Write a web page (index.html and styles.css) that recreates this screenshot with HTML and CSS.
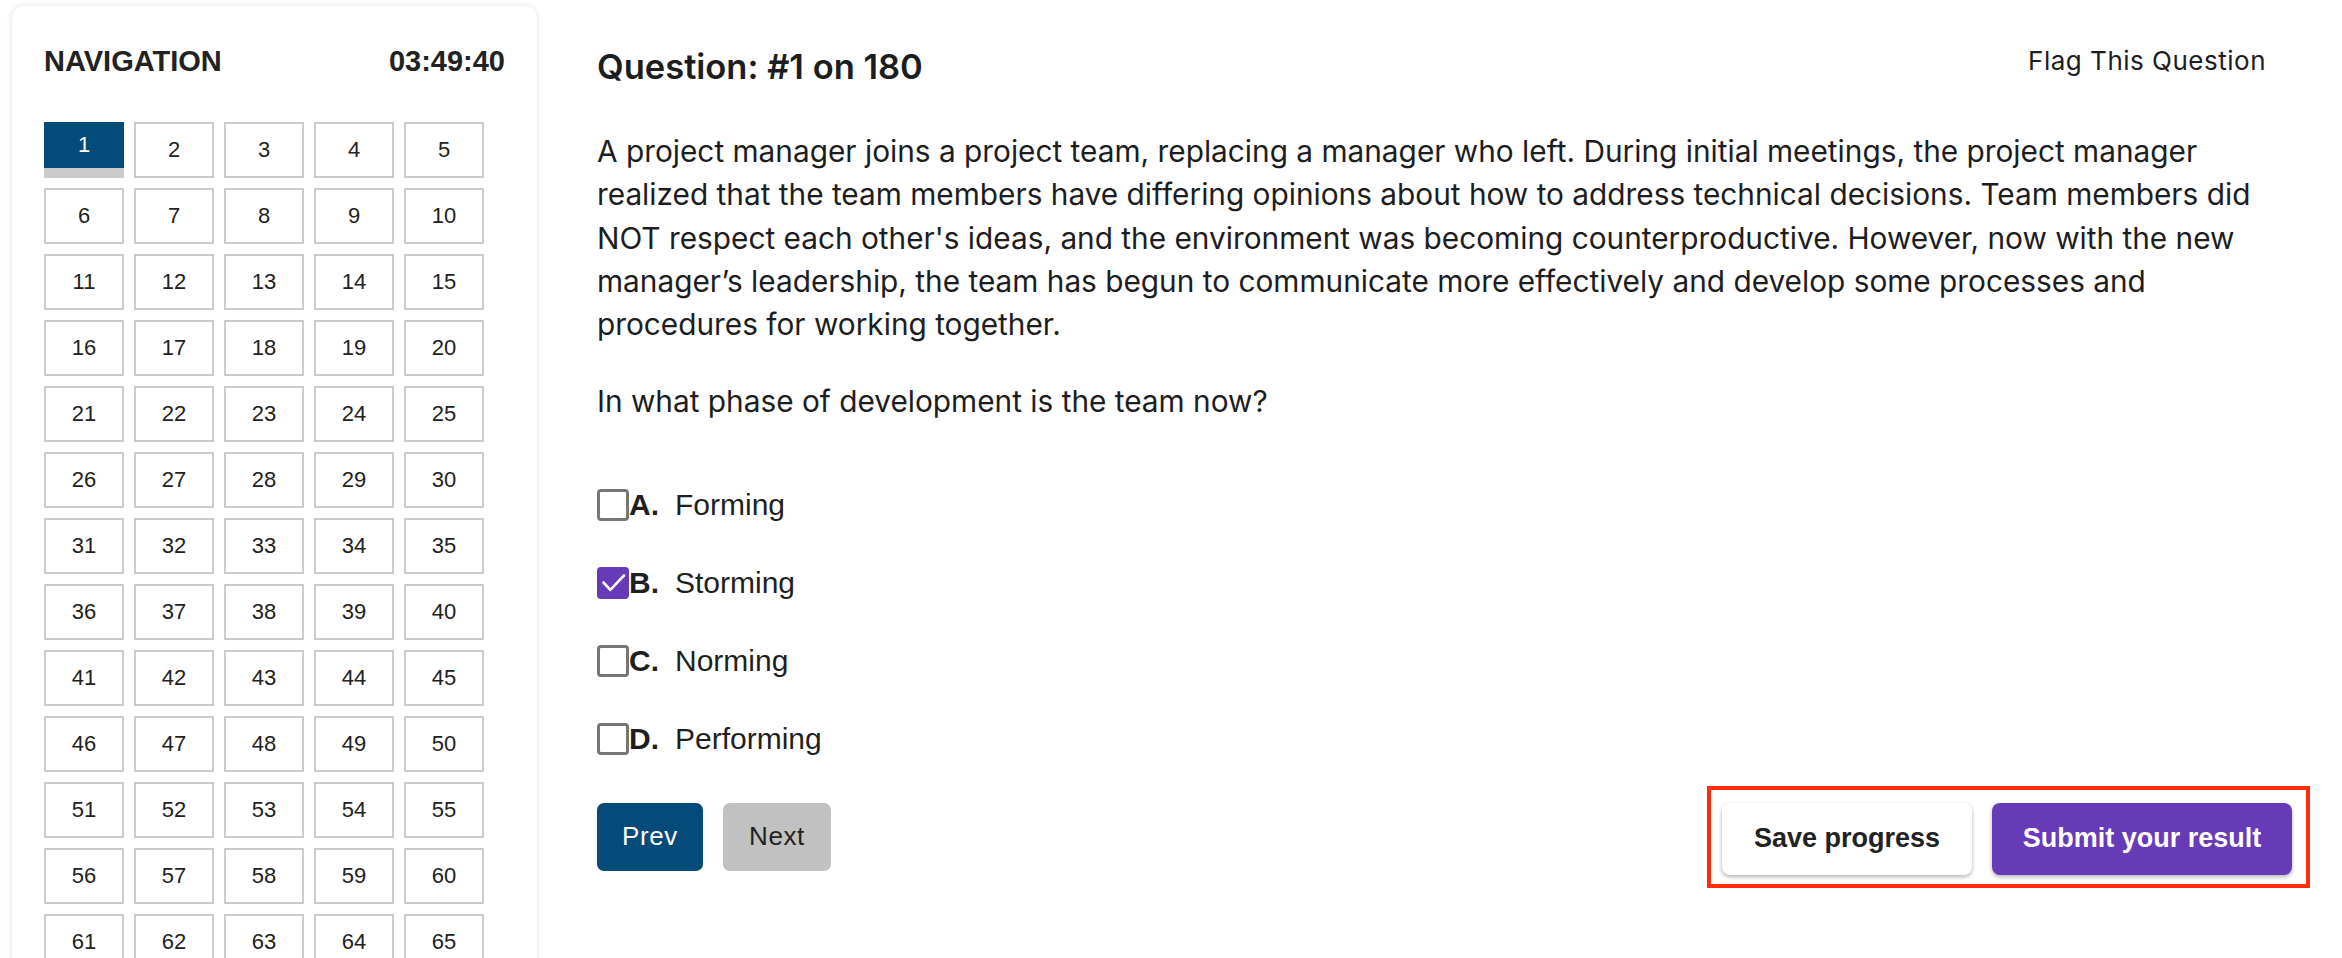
FILE: index.html
```html
<!DOCTYPE html>
<html lang="en">
<head>
<meta charset="utf-8">
<title>Exam</title>
<link rel="stylesheet" href="styles.css">
</head>
<body>
<div class="page">
  <aside class="nav-card">
    <div class="nav-head">
      <span class="nav-title">NAVIGATION</span>
      <span class="nav-timer">03:49:40</span>
    </div>
    <div class="nav-grid">
      <button class="cell current">1</button><button class="cell">2</button><button class="cell">3</button><button class="cell">4</button><button class="cell">5</button>
      <button class="cell">6</button><button class="cell">7</button><button class="cell">8</button><button class="cell">9</button><button class="cell">10</button>
      <button class="cell">11</button><button class="cell">12</button><button class="cell">13</button><button class="cell">14</button><button class="cell">15</button>
      <button class="cell">16</button><button class="cell">17</button><button class="cell">18</button><button class="cell">19</button><button class="cell">20</button>
      <button class="cell">21</button><button class="cell">22</button><button class="cell">23</button><button class="cell">24</button><button class="cell">25</button>
      <button class="cell">26</button><button class="cell">27</button><button class="cell">28</button><button class="cell">29</button><button class="cell">30</button>
      <button class="cell">31</button><button class="cell">32</button><button class="cell">33</button><button class="cell">34</button><button class="cell">35</button>
      <button class="cell">36</button><button class="cell">37</button><button class="cell">38</button><button class="cell">39</button><button class="cell">40</button>
      <button class="cell">41</button><button class="cell">42</button><button class="cell">43</button><button class="cell">44</button><button class="cell">45</button>
      <button class="cell">46</button><button class="cell">47</button><button class="cell">48</button><button class="cell">49</button><button class="cell">50</button>
      <button class="cell">51</button><button class="cell">52</button><button class="cell">53</button><button class="cell">54</button><button class="cell">55</button>
      <button class="cell">56</button><button class="cell">57</button><button class="cell">58</button><button class="cell">59</button><button class="cell">60</button>
      <button class="cell">61</button><button class="cell">62</button><button class="cell">63</button><button class="cell">64</button><button class="cell">65</button>
      <button class="cell">66</button><button class="cell">67</button><button class="cell">68</button><button class="cell">69</button><button class="cell">70</button>
      <button class="cell">71</button><button class="cell">72</button><button class="cell">73</button><button class="cell">74</button><button class="cell">75</button>
    </div>
  </aside>

  <main class="question">
    <div class="q-head">
      <h1 class="q-title">Question: #1 on 180</h1>
      <button class="flag">Flag This Question</button>
    </div>
    <p class="q-text">A project manager joins a project team, replacing a manager who left. During initial meetings, the project manager realized that the team members have differing opinions about how to address technical decisions. Team members did NOT respect each other's ideas, and the environment was becoming counterproductive. However, now with the new manager’s leadership, the team has begun to communicate more effectively and develop some processes and procedures for working together.</p>
    <p class="q-ask">In what phase of development is the team now?</p>

    <ul class="options">
      <li class="option">
        <span class="box"></span><span class="letter">A.</span><span class="answer">Forming</span>
      </li>
      <li class="option">
        <span class="box checked"><svg viewBox="0 0 32 32" width="32" height="32"><polyline points="6.5,15.5 13.3,22.8 27,8.5" fill="none" stroke="#fff" stroke-width="2.6" stroke-linecap="round" stroke-linejoin="round"/></svg></span><span class="letter">B.</span><span class="answer">Storming</span>
      </li>
      <li class="option">
        <span class="box"></span><span class="letter">C.</span><span class="answer">Norming</span>
      </li>
      <li class="option">
        <span class="box"></span><span class="letter">D.</span><span class="answer">Performing</span>
      </li>
    </ul>

    <div class="actions">
      <div class="pager">
        <button class="btn-prev">Prev</button>
        <button class="btn-next">Next</button>
      </div>
      <div class="submit-group">
        <button class="btn-save">Save progress</button>
        <button class="btn-submit">Submit your result</button>
      </div>
    </div>
  </main>
</div>
</body>
</html>
```

FILE: styles.css
```css
* { box-sizing: border-box; }
html, body { margin: 0; padding: 0; background: #fff; }
body { overflow: hidden; color: #1f1f1f; }

.page {
  display: flex;
  align-items: flex-start;
  padding: 6px 50px 0 12px;
  height: 958px;
}

/* Sidebar */
.nav-card {
  flex: 0 0 525px;
  background: #fff;
  border-radius: 12px;
  box-shadow: 0 0 6px rgba(0,0,0,0.12);
  padding: 39px 32px 40px 32px;
  font-family: "Liberation Sans", Arial, sans-serif;
}
.nav-head {
  display: flex;
  justify-content: space-between;
  align-items: center;
  font-weight: 700;
  font-size: 29px;
  line-height: 33px;
  color: #222;
  margin-bottom: 44px;
}
.nav-grid {
  display: grid;
  grid-template-columns: repeat(5, 80px);
  grid-auto-rows: 56px;
  gap: 10px;
}
.cell {
  font-family: "Liberation Sans", Arial, sans-serif;
  font-size: 22px;
  color: #222;
  background: #fff;
  border: 2px solid #cccccc;
  padding: 0;
  margin: 0;
}
.cell.current {
  background: #044b7a;
  color: #fff;
  border: none;
  border-bottom: 10px solid #cccccc;
}

/* Main */
.question {
  flex: 1;
  padding: 40px 0 0 60px;
  font-family: Inter, "Noto Sans", sans-serif;
  color: #1d1d1f;
}
.q-head {
  display: flex;
  justify-content: space-between;
  align-items: flex-start;
}
.q-title {
  margin: 0;
  font-size: 34.5px;
  font-weight: 600;
  line-height: 41px;
}
.flag {
  font-family: Inter, "Noto Sans", sans-serif;
  font-size: 26px;
  letter-spacing: 0.5px;
  color: #1d1d1f;
  background: none;
  border: none;
  padding: 0;
  margin: 0 26px 0 0;
  line-height: 30px;
}
.q-text, .q-ask {
  font-size: 29.8px;
  line-height: 43.3px;
  margin: 43px 0 0 0;
  padding-right: 26px;
}
.q-ask { margin-top: 34px; }

.options {
  list-style: none;
  margin: 65px 0 0 0;
  padding: 0;
  font-family: "Liberation Sans", Arial, sans-serif;
  font-size: 30px;
  color: #1f1f1f;
}
.option {
  display: flex;
  align-items: center;
  height: 32px;
  margin-bottom: 46px;
}
.box {
  flex: 0 0 32px;
  width: 32px;
  height: 32px;
  border: 3px solid #767676;
  border-radius: 4px;
  background: #fff;
  display: flex;
  align-items: center;
  justify-content: center;
}
.box.checked {
  background: #673ab7;
  border: none;
}
.letter {
  font-weight: 700;
  margin-right: 16px;
}

.actions {
  display: flex;
  justify-content: space-between;
  align-items: center;
  margin-top: -15px;
}
.pager { display: flex; gap: 20px; }
.btn-prev, .btn-next {
  height: 68px;
  border: none;
  border-radius: 7px;
  font-family: "Liberation Sans", Arial, sans-serif;
  font-size: 26px;
  letter-spacing: 0.6px;
}
.btn-prev { width: 106px; background: #044b7a; color: #fff; }
.btn-next { width: 108px; background: #c1c1c1; color: #222; }

.submit-group {
  display: flex;
  gap: 20px;
  border: 4px solid #ff2d0d;
  padding: 13px 14px 9px 11px;
  margin-right: -18px;
}
.btn-save, .btn-submit {
  height: 72px;
  border: none;
  border-radius: 8px;
  font-family: "Liberation Sans", Arial, sans-serif;
  font-weight: 700;
  font-size: 27px;
  box-shadow: 0 2px 4px rgba(0,0,0,0.3);
}
.btn-save { width: 250px; background: #fff; color: #222; }
.btn-submit { width: 300px; background: #673ab7; color: #fff; }
```
